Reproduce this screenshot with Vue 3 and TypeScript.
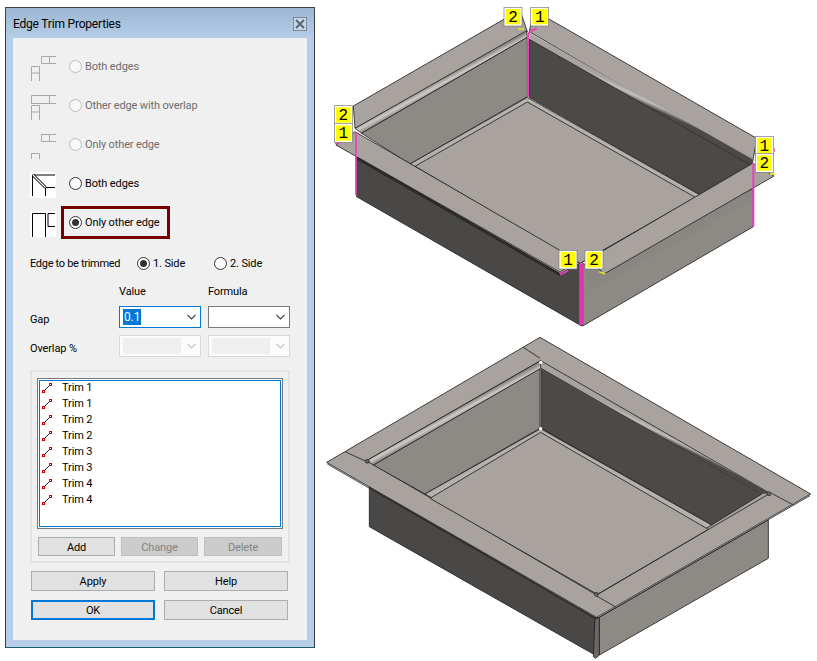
<script setup lang="ts">
interface TrimOption {
  label: string;
  icon: string;
  enabled: boolean;
  checked?: boolean;
  marked?: boolean;
}

const upperRect = 'M26 1.5H11.5V8.5H26M19.5 1.5V8.5';
const lowerRect = 'M1.5 26V11.5H9.5V26M1.5 18H9.5';

const options: TrimOption[] = [
  { label: 'Both edges', icon: upperRect + lowerRect, enabled: false },
  { label: 'Other edge with overlap', icon: 'M26 1.5H1.5V9.5H26M19.5 1.5V9.5' + lowerRect, enabled: false },
  { label: 'Only other edge', icon: upperRect + 'M1.5 26V20.5H9.5V26', enabled: false },
  { label: 'Both edges', icon: 'M25 3H2.5V24M15.5 15.5H25M15.5 15.5V24', enabled: true },
  { label: 'Only other edge', icon: 'M2.5 26V2.5H15.5V26M18 2.5V15.5H25M18 2.5H25', enabled: true, checked: true, marked: true },
];

const trims = ['Trim 1', 'Trim 1', 'Trim 2', 'Trim 2', 'Trim 3', 'Trim 3', 'Trim 4', 'Trim 4'];

const topLabels = [
  { n: '2', x: 552, y: 22 },
  { n: '1', x: 632, y: 22 },
  { n: '2', x: 43, y: 317 },
  { n: '1', x: 43, y: 371 },
  { n: '1', x: 1306, y: 409 },
  { n: '2', x: 1306, y: 461 },
  { n: '1', x: 717, y: 751 },
  { n: '2', x: 795, y: 751 },
];
</script>

<template>
  <div class="page">
    <section class="dialog">
      <header class="titlebar">
        <span class="title">Edge Trim Properties</span>
        <span class="close">
          <svg width="10" height="10" viewBox="0 0 10 10"><path d="M1 1L9 9M9 1L1 9" stroke="#5b6670" stroke-width="2" /></svg>
        </span>
      </header>

      <div class="client">
        <div class="options">
          <label v-for="(o, i) in options" :key="i" class="option" :class="{ off: !o.enabled }">
            <svg class="opt-icon" :class="{ lit: o.enabled }" width="26" height="26" viewBox="0 0 26 26">
              <path :d="o.icon" fill="none" :stroke="o.enabled ? '#000' : '#a8a8a8'" stroke-width="1" />
              <template v-if="i === 3">
                <path d="M3 3L15.5 15.5" stroke="#000" stroke-width="3" />
                <path d="M3 3L15.5 15.5" stroke="#fff" stroke-width="1.2" />
              </template>
            </svg>
            <span class="choice" :class="{ marked: o.marked }">
              <input type="radio" class="radio" :checked="o.checked" :disabled="!o.enabled" />
              <span>{{ o.label }}</span>
            </span>
          </label>
        </div>

        <div class="side-row">
          <span class="side-label">Edge to be trimmed</span>
          <label class="side side-one"><input type="radio" class="radio" checked /><span>1. Side</span></label>
          <label class="side"><input type="radio" class="radio" /><span>2. Side</span></label>
        </div>

        <div class="fields">
          <span></span>
          <span class="head">Value</span>
          <span class="head">Formula</span>

          <span class="field-label">Gap</span>
          <div class="combo focus">
            <span class="sel">0.1</span>
            <svg class="chev" width="9" height="6" viewBox="0 0 9 6"><path d="M0.5 1L4.5 5L8.5 1" fill="none" stroke="#444" stroke-width="1.1" /></svg>
          </div>
          <div class="combo">
            <svg class="chev" width="9" height="6" viewBox="0 0 9 6"><path d="M0.5 1L4.5 5L8.5 1" fill="none" stroke="#444" stroke-width="1.1" /></svg>
          </div>

          <span class="field-label">Overlap %</span>
          <div class="combo dim">
            <span class="blank"></span>
            <svg class="chev" width="9" height="6" viewBox="0 0 9 6"><path d="M0.5 1L4.5 5L8.5 1" fill="none" stroke="#c4c4c4" stroke-width="1.1" /></svg>
          </div>
          <div class="combo dim">
            <span class="blank"></span>
            <svg class="chev" width="9" height="6" viewBox="0 0 9 6"><path d="M0.5 1L4.5 5L8.5 1" fill="none" stroke="#c4c4c4" stroke-width="1.1" /></svg>
          </div>
        </div>

        <div class="group">
          <div class="listbox">
            <ul class="list">
              <li v-for="(t, i) in trims" :key="i" class="item">
                <svg width="12" height="12" viewBox="0 0 12 12">
                  <path d="M2.5 9.5L9.5 2.5" stroke="#222" stroke-width="1" />
                  <rect x="1.5" y="8.5" width="2" height="2" fill="#fff" stroke="#d00000" />
                  <rect x="8.5" y="1.5" width="2" height="2" fill="#fff" stroke="#d00000" />
                </svg>
                <span class="item-text">{{ t }}</span>
              </li>
            </ul>
          </div>
          <div class="list-btns">
            <button class="btn">Add</button>
            <button class="btn" disabled>Change</button>
            <button class="btn" disabled>Delete</button>
          </div>
        </div>

        <div class="actions">
          <button class="btn">Apply</button>
          <button class="btn">Help</button>
          <button class="btn primary">OK</button>
          <button class="btn">Cancel</button>
        </div>
      </div>
    </section>

    <div class="figures">
      <svg class="fig-top" width="497" height="330" viewBox="0 0 1491 990">
        <defs>
          <linearGradient id="bendA" gradientUnits="userSpaceOnUse" x1="360" y1="240" x2="372" y2="262">
            <stop offset="0" stop-color="#8f8b87" />
            <stop offset="0.5" stop-color="#cfcbc7" />
            <stop offset="1" stop-color="#8f8b87" />
          </linearGradient>
          <linearGradient id="bendB" gradientUnits="userSpaceOnUse" x1="965" y1="284" x2="955" y2="306">
            <stop offset="0" stop-color="#a8a39e" />
            <stop offset="0.45" stop-color="#c4c0bc" />
            <stop offset="0.75" stop-color="#85817e" />
            <stop offset="1" stop-color="#4c4a48" />
          </linearGradient>
        </defs>
        <g stroke="#222" stroke-width="2.5" stroke-linejoin="round">
          <polygon points="110,470 720,820 778,790 785,978 110,590" fill="#4a4846" />
          <polygon points="788,790 852,825 1300,565 1300,680 788,978" fill="#8d8985" />
          <polygon points="795,812 808,875 1290,605 1298,568" fill="#8a8682" stroke="none" />
          <polygon points="100,318 600,30 622,95 105,385" fill="#a8a39e" />
          <polygon points="640,30 1310,415 1298,488 628,95" fill="#a8a39e" />
          <polygon points="105,385 620,92 622,112 125,400" fill="url(#bendA)" />
          <polygon points="628,98 1298,478 1295,497 628,118" fill="url(#bendB)" stroke="none" />
          <polygon points="125,400 622,112 622,290 270,492" fill="#8d8985" />
          <polygon points="628,118 1295,497 1140,585 628,292" fill="#4c4a48" />
          <polygon points="270,492 622,292 1140,585 780,790" fill="#b5b1ad" />
          <polygon points="285,499 622,306 1126,592 780,790" fill="#a8a39e" />
          <polygon points="48,435 105,395 718,750 748,800 720,816" fill="#a8a39e" />
          <polygon points="1362,528 1298,490 845,755 825,795 852,822" fill="#a8a39e" />
          <polygon points="108,470 718,820 718,826 108,476" fill="#33312f" />
        </g>
        <g fill="none" stroke="#e93fbd">
          <path d="M108 395V585" stroke-width="5" />
          <path d="M624 290V108Q624 92 650 86" stroke-width="6" />
          <path d="M1300 490V680" stroke-width="6" />
          <path d="M783 790V975" stroke="#f02fb6" stroke-width="11" />
          <path d="M720 824L744 812" stroke-width="6" />
          <path d="M46 432L58 426" stroke-width="5" />
          <path d="M1363 445V455" stroke-width="3" />
        </g>
        <g fill="none" stroke="#e6e21c" stroke-width="5">
          <path d="M595 87H612" />
          <path d="M838 815L856 822" />
          <path d="M1350 522H1364" />
        </g>
        <g v-for="(l, i) in topLabels" :key="i">
          <rect :x="l.x" :y="l.y" width="54" height="56" fill="#fff" stroke="#777" stroke-width="2" />
          <rect :x="l.x + 5" :y="l.y + 5" width="44" height="46" fill="#ffff00" />
          <text class="digit" :x="l.x + 27" :y="l.y + 44" text-anchor="middle">{{ l.n }}</text>
        </g>
      </svg>

      <svg class="fig-bottom" width="497" height="331" viewBox="0 0 1491 993">
        <defs>
          <linearGradient id="bendC" gradientUnits="userSpaceOnUse" x1="400" y1="242" x2="412" y2="264">
            <stop offset="0" stop-color="#8f8b87" />
            <stop offset="0.5" stop-color="#cfcbc7" />
            <stop offset="1" stop-color="#8f8b87" />
          </linearGradient>
          <linearGradient id="bendD" gradientUnits="userSpaceOnUse" x1="1000" y1="290" x2="992" y2="306">
            <stop offset="0" stop-color="#a8a39e" />
            <stop offset="0.45" stop-color="#c4c0bc" />
            <stop offset="0.75" stop-color="#85817e" />
            <stop offset="1" stop-color="#4c4a48" />
          </linearGradient>
        </defs>
        <g stroke="#222" stroke-width="2.5" stroke-linejoin="round">
          <polygon points="148,470 825,862 825,975 148,590" fill="#4a4846" />
          <polygon points="838,862 1345,570 1345,685 838,975" fill="#8d8985" />
          <polygon points="825,862 838,862 838,975 828,985 820,980" fill="#6a6866" />
          <path d="M22 402L828 867L1470 497" fill="none" />
          <polygon points="20,397 660,22 1472,492 830,862" fill="#a8a39e" />
          <polygon points="140,392 662,92 1350,490 830,795" fill="#a8a39e" />
          <polygon points="160,405 660,115 660,295 315,492" fill="#8d8985" />
          <polygon points="665,115 1325,492 1175,585 665,296" fill="#4c4a48" />
          <polygon points="315,492 662,296 1175,585 835,790" fill="#b5b1ad" />
          <polygon points="330,505 662,307 1165,598 832,793" fill="#a8a39e" />
          <polygon points="140,392 662,92 662,115 160,405" fill="url(#bendC)" />
          <polygon points="665,100 1350,490 1325,492 665,115" fill="url(#bendD)" stroke="none" />
          <path d="M75 365L140 395M610 52L660 85M1355 490L1420 525M825 795L885 830" fill="none" />
        </g>
        <circle cx="662" cy="97" r="5" fill="#fff" />
        <circle cx="662" cy="296" r="5" fill="#fff" />
        <g fill="#666" stroke="#222" stroke-width="2">
          <circle cx="142" cy="394" r="6" />
          <circle cx="1347" cy="491" r="6" />
          <circle cx="829" cy="793" r="6" />
        </g>
      </svg>
    </div>
  </div>
</template>

<style scoped>
.page {
  display: flex;
  align-items: flex-start;
  width: 817px;
  height: 661px;
  overflow: hidden;
  background: #fff;
  font-family: Roboto, "Liberation Sans", Arial, sans-serif;
  font-size: 11px;
  letter-spacing: -0.13px;
  color: #000;
}

.dialog {
  box-sizing: border-box;
  width: 310px;
  height: 641px;
  margin: 7px 0 0 5px;
  padding: 0 7px 7px;
  border: 1px solid #3a4046;
  border-bottom-color: #1c5a66;
  background: linear-gradient(to bottom, #9cb6d3 0, #b6cee8 32px, #b6cee8 100%);
}

.titlebar {
  display: flex;
  align-items: center;
  justify-content: space-between;
  height: 30px;
  padding-top: 2px;
  box-sizing: border-box;
}
.title { font-size: 12px; letter-spacing: -0.2px; }
.close {
  display: flex;
  align-items: center;
  justify-content: center;
  box-sizing: border-box;
  width: 14px;
  height: 14px;
  border: 1px solid #7d8a97;
  background: #c5d7ea;
}

.client {
  box-sizing: border-box;
  height: 602px;
  padding: 17px 17px 0;
  background: #f0f0f0;
}

.options { display: flex; flex-direction: column; gap: 13px; }
.option { display: flex; align-items: center; height: 26px; gap: 13px; }
.option.off { color: #6d6d6d; }
.opt-icon.lit { background: #fff; }

.choice { position: relative; display: flex; align-items: center; gap: 3px; margin-bottom: 4px; }
.choice.marked::after {
  content: "";
  position: absolute;
  left: -8px;
  top: -10px;
  width: 109px;
  height: 33px;
  box-sizing: border-box;
  border: 3px solid #760000;
}

.radio {
  appearance: none;
  display: flex;
  align-items: center;
  justify-content: center;
  box-sizing: border-box;
  width: 13px;
  height: 13px;
  margin: 0;
  border: 1px solid #333;
  border-radius: 50%;
  background: #fff;
}
.radio:checked::before {
  content: "";
  width: 7px;
  height: 7px;
  border-radius: 50%;
  background: #333;
}
.radio:disabled { border-color: #bcbcbc; background: #f8f8f8; }

.side-row { display: flex; align-items: center; height: 16px; margin-top: 18px; }
.side-label { width: 107px; letter-spacing: -0.3px; }
.side { display: flex; align-items: center; gap: 3px; }
.side-one { width: 77px; }

.fields {
  display: grid;
  grid-template-columns: 82px 82px 82px;
  grid-template-rows: 16px 22px 22px;
  gap: 7px;
  margin-top: 12px;
  align-items: center;
}
.head { line-height: 16px; margin-top: 2px; }
.field-label { line-height: 16px; margin-top: 5px; }

.combo {
  position: relative;
  display: flex;
  align-items: center;
  box-sizing: border-box;
  height: 22px;
  padding-left: 3px;
  border: 1px solid #7a7a7a;
  background: #fff;
}
.combo.focus { border-color: #0078d7; }
.combo.dim { border-color: #d9d9d9; background: #fcfcfc; }
.sel {
  padding: 1px 1px;
  line-height: 14px;
  background: #0078d7;
  color: #fff;
  font-size: 12px;
}
.blank { width: 58px; height: 16px; background: #efefef; }
.chev { position: absolute; right: 4px; top: 7px; }

.group {
  box-sizing: border-box;
  width: 260px;
  height: 193px;
  margin-top: 13px;
  padding: 6px 5px 0;
  border: 2px solid #e3e3e3;
}
.listbox {
  box-sizing: border-box;
  width: 246px;
  height: 151px;
  border: 1px solid #7a7a7a;
  background: #fff;
  padding: 1px;
}
.list {
  box-sizing: border-box;
  height: 100%;
  margin: 0;
  padding: 0 0 0 1px;
  list-style: none;
  border: 1px solid #0078d7;
}
.item { display: flex; align-items: center; gap: 9px; height: 16px; }
.item:first-child { margin-top: -1px; }
.item-text { margin-bottom: 2px; }

.list-btns { display: flex; gap: 6px; margin: 8px 0 0 1px; }
.list-btns .btn { width: 77px; height: 19px; padding-top: 1px; }
.list-btns .btn:last-child { width: 78px; }

.btn {
  box-sizing: border-box;
  padding: 0;
  border: 1px solid #adadad;
  border-radius: 0;
  background: #e1e1e1;
  color: #000;
  font: 11px Roboto, "Liberation Sans", Arial, sans-serif;
  letter-spacing: -0.13px;
}
.btn:disabled { background: #cccccc; border-color: #bfbfbf; color: #838383; }
.btn.primary { border: 2px solid #0078d7; }

.actions {
  display: grid;
  grid-template-columns: 124px 124px;
  grid-auto-rows: 20px;
  gap: 9px;
  margin: 8px 0 0 1px;
}

.figures { display: flex; flex-direction: column; margin-left: 5px; }
.fig-top, .fig-bottom { display: block; }
.digit { font-family: "Liberation Mono", monospace; font-size: 48px; fill: #000; }
</style>
